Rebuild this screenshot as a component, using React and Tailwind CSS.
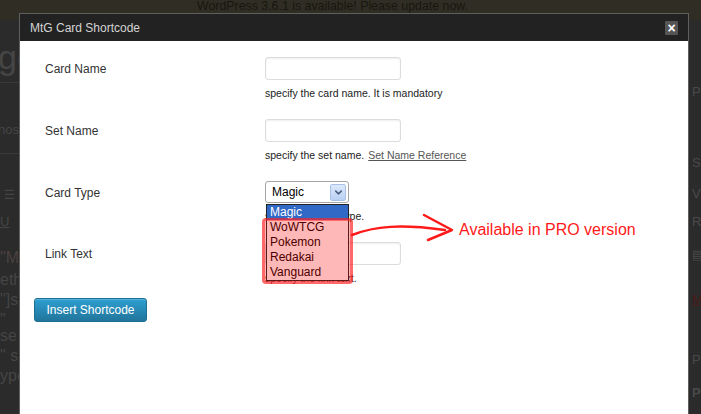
import { ChevronDown } from 'lucide-react';

const rows = [
  { label: 'Card Name', help: 'specify the card name. It is mandatory' },
  { label: 'Set Name', help: 'specify the set name.', link: 'Set Name Reference' },
  { label: 'Card Type', help: 'specify the card type.', select: true },
  { label: 'Link Text', help: 'specify the link text.' },
];

const options = ['Magic', 'WoWTCG', 'Pokemon', 'Redakai', 'Vanguard'];

export default function App() {
  return (
    <div className="relative w-[701px] h-[414px] overflow-hidden bg-[#2b2b2b] font-['Liberation_Sans',Arial,sans-serif]">
      {/* page behind the overlay */}
      <div className="h-[20px] bg-[#302e24] flex pl-[197px]">
        <span className="text-[13px] leading-none text-[#17160f] -mt-[1px] scale-x-[0.95] origin-left">WordPress 3.6.1 is available! Please update now.</span>
      </div>
      <div className="flex justify-between">
        <div className="w-[19px] flex flex-col text-[#454545] text-[20px] leading-none overflow-hidden">
          <span className="mt-[20px] text-[34px] -ml-[2px]">ge</span>
          <div className="mt-[8px] h-px bg-[#3a3a3a]" />
          <span className="mt-[40px] text-[13px] -ml-[2px]">nos</span>
          <div className="mt-[17px] h-px bg-[#3a3a3a]" />
          <span className="mt-[35px] text-[12px] ml-[4px]">☰</span>
          <span className="mt-[14px] text-[13px] underline">U</span>
          <span className="mt-[22px] text-[16px] text-[#4a4040]">"M</span>
          <span className="mt-[6px] text-[16px]">eth</span>
          <span className="mt-[4px] text-[16px]">"]s</span>
          <span className="mt-[4px] text-[16px]">" se</span>
          <span className="mt-[4px] text-[16px]">" s</span>
          <span className="mt-[4px] text-[16px]">ype</span>
        </div>
        <div className="w-[12px] flex flex-col text-[#4a4a4a] text-[13px] leading-none pl-[3px] overflow-hidden">
          <span className="mt-[65px]">P</span>
          <span className="mt-[58px]">S</span>
          <span className="mt-[18px]">Vi</span>
          <span className="mt-[15px]">R</span>
          <span className="mt-[20px]">▤</span>
          <span className="mt-[32px] text-[#4a1a1a] underline">M</span>
          <span className="mt-[47px]">P</span>
          <span className="mt-[20px] font-bold">P</span>
        </div>
      </div>

      {/* modal */}
      <div className="absolute left-[19px] top-[13px] w-[670px] h-[401px] border border-[#5f5f5f] border-b-0 bg-white flex flex-col">
        <div className="h-[27px] bg-[#222] flex items-center justify-between pl-[10px] pr-[10px] shrink-0">
          <span className="text-[12px] text-[#d4d4d4]">MtG Card Shortcode</span>
          <div className="w-[13px] h-[14px] bg-[#555] rounded-[1px] flex items-center justify-center text-white text-[14px] font-bold leading-none">×</div>
        </div>
        <div className="pt-[16px] flex flex-col gap-[19px]">
          {rows.map((r) => (
            <div key={r.label} className="flex">
              <div className="w-[245px] pl-[25px] h-[23px] flex items-center text-[12px] text-[#333]">{r.label}</div>
              <div className="flex flex-col">
                {r.select ? (
                  <div className="relative">
                    <div className="w-[84px] h-[22px] border border-[#a5a5a5] rounded-[3px] bg-white flex items-center justify-between pl-[6px] pr-[2px] text-[12px] text-black">
                      <span>Magic</span>
                      <div className="w-[16px] h-[17px] rounded-[2px] border border-[#a9c1e6] bg-gradient-to-b from-[#dde9fb] to-[#b9d0f3] flex items-center justify-center">
                        <ChevronDown className="w-[11px] h-[11px] text-[#4d6185]" strokeWidth={3.5} />
                      </div>
                    </div>
                    <div className="absolute left-px top-[23px] w-[83px] border border-[#222] bg-white text-[12px] text-black z-10">
                      {options.map((o, i) => (
                        <div key={o} className={`h-[15px] leading-[15px] pl-[3px] ${i === 0 ? 'bg-[#3169c6] text-white' : ''}`}>{o}</div>
                      ))}
                    </div>
                  </div>
                ) : (
                  <div className="w-[136px] h-[23px] border border-[#dcdcdc] rounded-[3px] bg-white shadow-[inset_0_1px_2px_rgba(0,0,0,0.07)]" />
                )}
                <div className="mt-[7px] h-[13px] text-[10.5px] leading-[13px] text-[#222]">
                  {r.help}
                  {r.link && <span className="ml-[4px] underline text-[#555]">{r.link}</span>}
                </div>
              </div>
            </div>
          ))}
        </div>
        <div className="pl-[14px] pt-[12px]">
          <button className="w-[113px] h-[24px] rounded-[3px] border border-[#1f6d92] bg-gradient-to-b from-[#2e9fd2] to-[#21759b] text-white text-[12px] shadow-[inset_0_1px_0_rgba(120,200,230,0.5)]">
            Insert Shortcode
          </button>
        </div>
      </div>

      {/* annotation */}
      <div className="absolute left-[262px] top-[218px] w-[91px] h-[66px] rounded-[4px] bg-[rgba(255,0,0,0.28)] border-[3px] border-[rgba(255,40,40,0.55)] z-20" />
      <svg className="absolute left-0 top-0 z-20" width="701" height="414">
        <path d="M352 235 C 375 226, 400 224, 445 230" fill="none" stroke="#ff1a1a" strokeWidth="2.5" strokeLinecap="round" />
        <path d="M424 215 L 452 230 L 428 240" fill="none" stroke="#ff1a1a" strokeWidth="2.5" strokeLinecap="round" strokeLinejoin="round" />
      </svg>
      <div className="absolute left-[459px] top-[220px] text-[16px] text-[#ff1a1a] z-20 leading-[20px]">Available in PRO version</div>
    </div>
  );
}
